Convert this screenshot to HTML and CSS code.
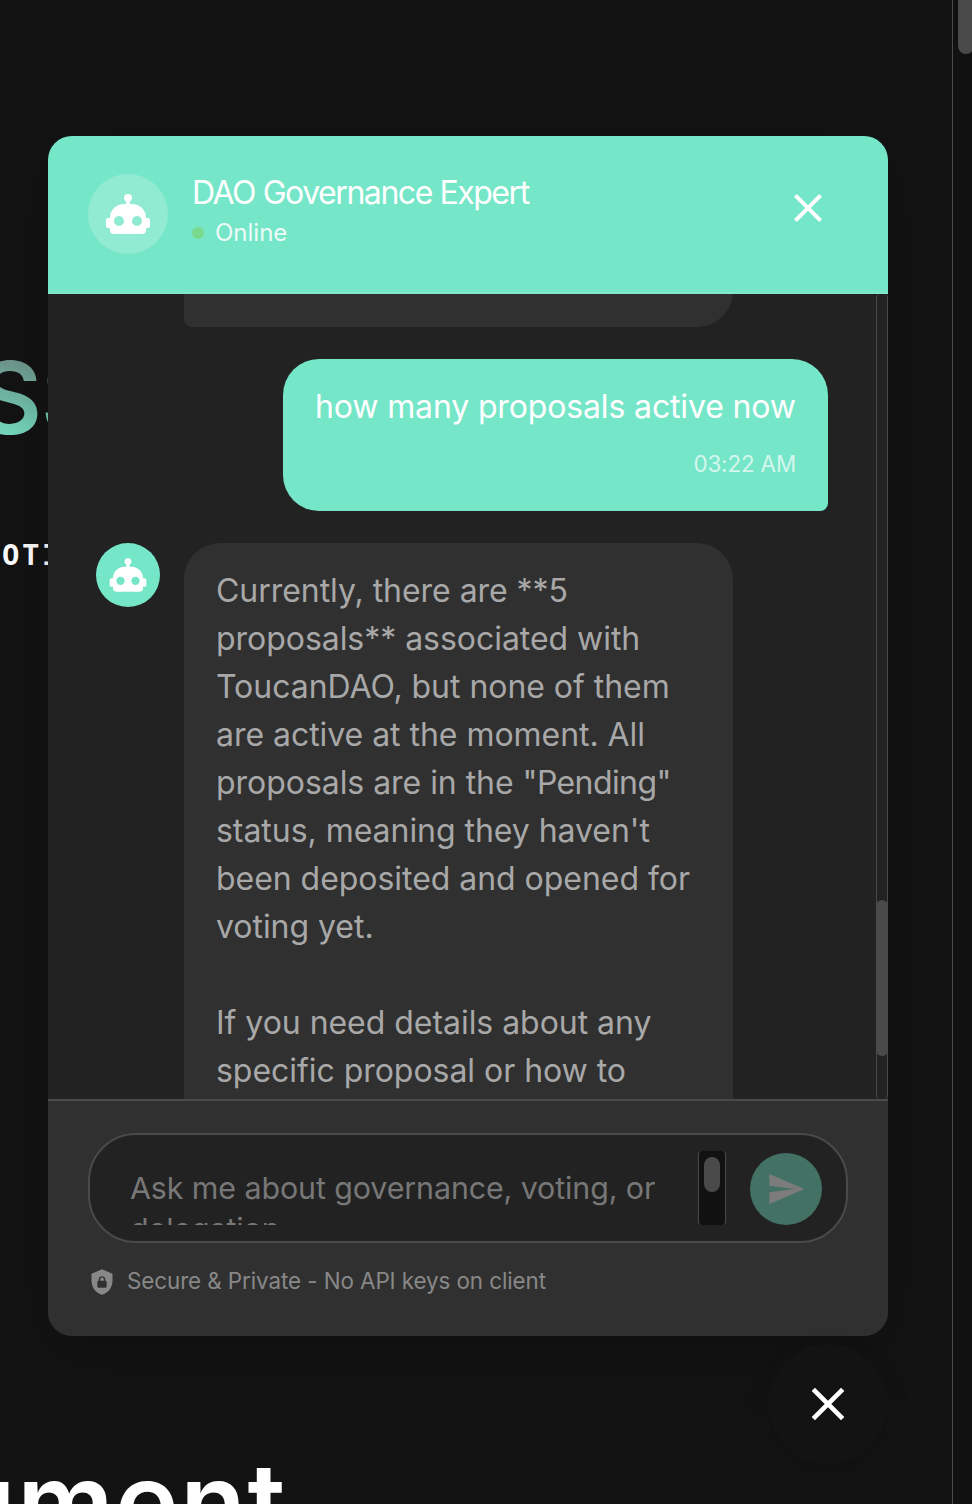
FILE: index.html
```html
<!DOCTYPE html>
<html lang="en">
<head>
<meta charset="utf-8">
<title>DAO Governance Expert</title>
<link rel="stylesheet" href="styles.css">
</head>
<body>
<svg class="sprite" aria-hidden="true">
  <symbol id="robot" viewBox="0 0 24 24"><path d="M12,2A2,2 0 0,1 14,4C14,4.74 13.6,5.39 13,5.73V7H14A7,7 0 0,1 21,14H22A1,1 0 0,1 23,15V18A1,1 0 0,1 22,19H21V20A2,2 0 0,1 19,22H5A2,2 0 0,1 3,20V19H2A1,1 0 0,1 1,18V15A1,1 0 0,1 2,14H3A7,7 0 0,1 10,7H11V5.73C10.4,5.39 10,4.74 10,4A2,2 0 0,1 12,2M7.5,13A2.5,2.5 0 0,0 5,15.5A2.5,2.5 0 0,0 7.5,18A2.5,2.5 0 0,0 10,15.5A2.5,2.5 0 0,0 7.5,13M16.5,13A2.5,2.5 0 0,0 14,15.5A2.5,2.5 0 0,0 16.5,18A2.5,2.5 0 0,0 19,15.5A2.5,2.5 0 0,0 16.5,13Z"/></symbol>
  <symbol id="close" viewBox="0 0 24 24"><path d="M19,6.41L17.59,5L12,10.59L6.41,5L5,6.41L10.59,12L5,17.59L6.41,19L12,13.41L17.59,19L19,17.59L13.41,12L19,6.41Z"/></symbol>
</svg>
<main class="page">
  <div class="hero-title">SS</div>
  <div class="hero-sub">OTI</div>
  <h2 class="section-title">ument</h2>
</main>
<div class="page-scroll"><div class="page-thumb"></div></div>

<section class="chat">
  <header class="chat-header">
    <div class="avatar avatar-lg"><svg width="48" height="48"><use href="#robot"/></svg></div>
    <div class="who">
      <div class="title">DAO Governance Expert</div>
      <div class="status"><span class="dot"></span><span>Online</span></div>
    </div>
    <div class="close"><svg width="48" height="48"><use href="#close"/></svg></div>
  </header>
  <div class="body">
    <div class="messages">
      <div class="bubble bot tail"></div>
      <div class="bubble user">
        <div>how many proposals active now</div>
        <div class="time">03:22 AM</div>
      </div>
      <div class="row">
        <div class="avatar"><svg width="40" height="40"><use href="#robot"/></svg></div>
        <div class="bubble bot reply">Currently, there are **5<br>proposals** associated with<br>ToucanDAO, but none of them<br>are active at the moment. All<br>proposals are in the <span class="quoted">"Pending"</span><br>status, meaning they haven't<br>been deposited and opened for<br>voting yet.<br><br>If you need details about any<br>specific proposal or how to</div>
      </div>
    </div>
    <div class="scroll"><div class="thumb"></div></div>
  </div>
  <footer class="composer">
    <div class="field">
      <div class="placeholder">Ask me about governance, voting, or<br>delegation...</div>
      <div class="mini-scroll"><div class="mini-thumb"></div></div>
      <div class="send"><svg width="40" height="40" viewBox="0 0 24 24"><path d="M2,21L23,12L2,3V10L17,12L2,14V21Z"/></svg></div>
    </div>
    <div class="note">
      <svg width="28" height="28" viewBox="0 0 24 24"><path d="M12,1L3,5V11C3,16.55 6.84,21.74 12,23C17.16,21.74 21,16.55 21,11V5L12,1M12,7C13.4,7 14.8,8.1 14.8,9.5V11C15.4,11 16,11.6 16,12.3V15.8C16,16.4 15.4,17 14.7,17H9.2C8.6,17 8,16.4 8,15.7V12.2C8,11.6 8.6,11 9.2,11V9.5C9.2,8.1 10.6,7 12,7M12,8.2C11.2,8.2 10.5,8.7 10.5,9.5V11H13.5V9.5C13.5,8.7 12.8,8.2 12,8.2Z"/></svg>
      <span class="note-text">Secure &amp; Private - No API keys on client</span>
    </div>
  </footer>
</section>
<div class="fab"><svg width="56" height="56"><use href="#close"/></svg></div>
</body>
</html>
```
FILE: styles.css
```css
* { box-sizing: border-box; }
body {
  margin: 0;
  width: 972px;
  height: 1504px;
  position: relative;
  overflow: hidden;
  display: flex;
  background: #131313;
  color: #fff;
  font-family: Inter, sans-serif;
}
svg { display: block; fill: currentColor; }
.sprite { position: absolute; width: 0; height: 0; }

.page { width: 952px; height: 1504px; padding-top: 338px; overflow: hidden; }
.hero-title {
  width: 200px;
  height: 120px;
  margin-left: -23px;
  font-size: 100px;
  line-height: 120px;
  font-weight: 600;
  letter-spacing: -1px;
  background: linear-gradient(#6e7f7a 0%, #6fa899 35%, #75d9be 80%);
  -webkit-background-clip: text;
  background-clip: text;
  color: transparent;
}
.hero-sub {
  margin: 77px 0 0 2px;
  height: 40px;
  font: bold 29px/40px "DejaVu Sans Mono", monospace;
  letter-spacing: 2.5px;
}
.section-title {
  margin: 866px 0 0 -50px;
  font-size: 107px;
  line-height: 120px;
  font-weight: 600;
  letter-spacing: 1.7px;
}
.page-scroll { width: 20px; height: 1504px; border-left: 1px solid #4a4a4a; padding-left: 5px; background: #111; overflow: hidden; }
.page-thumb { width: 16px; height: 54px; background: #4a4a4a; border-radius: 0 0 8px 8px; }

.chat {
  position: absolute;
  left: 48px;
  top: 136px;
  width: 840px;
  height: 1200px;
  display: flex;
  flex-direction: column;
  border-radius: 24px;
  overflow: hidden;
  background: #222;
  box-shadow: 0 16px 64px rgba(0, 0, 0, .2);
}
.chat-header {
  height: 158px;
  padding: 38px 56px 0 40px;
  display: flex;
  gap: 24px;
  background: #76e6c8;
  border-bottom: 2px solid #7fe9cd;
}
.avatar {
  flex: none;
  width: 64px;
  height: 64px;
  border-radius: 50%;
  display: flex;
  align-items: center;
  justify-content: center;
  background: #76e6c8;
}
.avatar-lg { width: 80px; height: 80px; background: rgba(255, 255, 255, .2); }
.who { flex: 1; padding-top: 1px; }
.title { font-size: 32px; line-height: 36px; letter-spacing: -1.45px; white-space: nowrap; }
.status { display: flex; align-items: center; gap: 11px; margin-top: 4px; font-size: 24px; line-height: 36px; color: rgba(255, 255, 255, .9); }
.dot { width: 12px; height: 12px; border-radius: 50%; background: #79d98c; }
.close { margin-top: 10px; height: 48px; }

.body { height: 805px; display: flex; overflow: hidden; }
.messages { width: 828px; padding: 0 48px; display: flex; flex-direction: column; gap: 32px; }
.bubble { padding: 24px 32px; font-size: 32px; line-height: 48px; white-space: nowrap; }
.bot { width: 549px; background: #303030; color: #a8a8a8; border-radius: 36px 36px 36px 8px; letter-spacing: -.04px; }
.quoted { letter-spacing: -.6px; }
.tail { flex: none; height: 73px; margin: -40px 0 0 88px; }
.user { flex: none; align-self: flex-end; width: 545px; height: 152px; background: #76e6c8; border-radius: 36px 36px 8px 36px; letter-spacing: -.14px; }
.time { margin-top: 16px; font-size: 22.4px; line-height: 33px; text-align: right; color: rgba(255, 255, 255, .7); }
.row { display: flex; gap: 24px; align-items: flex-start; }
.reply { height: 640px; }
.scroll { width: 12px; height: 805px; padding-top: 606px; border: 1px solid #4a4a4a; border-width: 0 1px; border-radius: 4px; }
.thumb { width: 12px; height: 156px; margin-left: -1px; border-radius: 6px; background: #4a4a4a; }

.composer { flex: 1; padding: 32px 40px 0; background: #303030; border-top: 2px solid #4a4a4a; }
.field {
  height: 110px;
  padding: 0 24px 0 40px;
  display: flex;
  align-items: center;
  border: 2px solid #4a4a4a;
  border-radius: 48px;
  background: #222;
}
.placeholder { width: 568px; height: 74px; padding-top: 17px; overflow: hidden; font-size: 30.4px; letter-spacing: -.1px; line-height: 41px; color: #777; white-space: nowrap; }
.mini-scroll { flex: none; width: 28px; height: 74px; padding: 6px 5px; border: 1px solid #4a4a4a; border-width: 0 1px; border-radius: 4px; background: #111; }
.mini-thumb { width: 16px; height: 35px; border-radius: 8px; background: #4a4a4a; }
.send { flex: none; width: 72px; height: 72px; margin: 2px 0 0 24px; border-radius: 50%; background: #437164; color: #7c7c7c; display: flex; align-items: center; justify-content: center; }
.note { display: flex; align-items: center; gap: 11px; margin-top: 23px; font-size: 22.4px; letter-spacing: -.08px; line-height: 33px; color: #888; }
.note-text { margin-top: -2px; }

.fab {
  position: absolute;
  left: 768px;
  top: 1344px;
  width: 120px;
  height: 120px;
  border-radius: 50%;
  display: flex;
  align-items: center;
  justify-content: center;
  background: #131313;
  box-shadow: 0 8px 24px rgba(0, 0, 0, .12);
}
```
